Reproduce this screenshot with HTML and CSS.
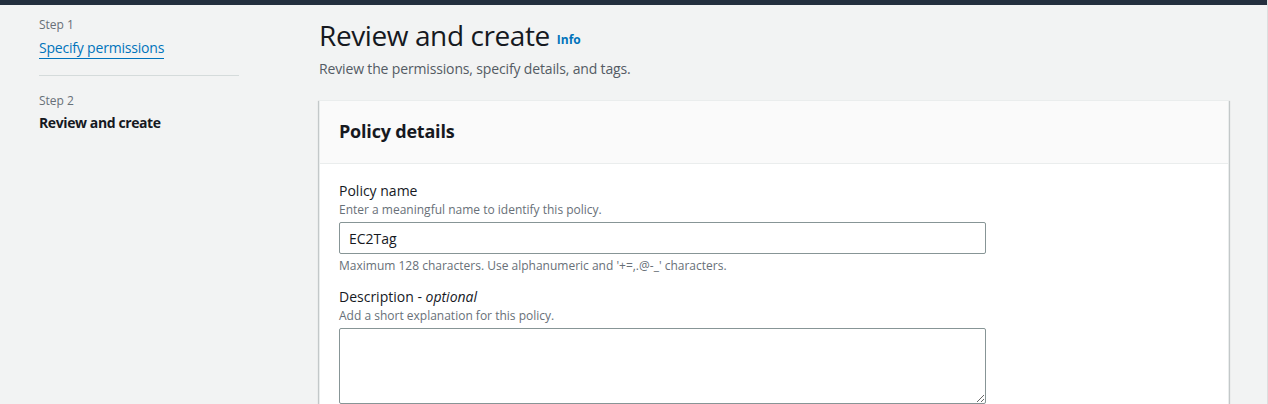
FILE: index.html
```html
<!DOCTYPE html>
<html lang="en">
<head>
<meta charset="utf-8">
<title>Review and create</title>
<link rel="stylesheet" href="styles.css">
</head>
<body>
<div class="topbar"></div>
<div class="layout">
  <nav class="steps">
    <div class="step">
      <div class="step-label">Step 1</div>
      <a class="step-link" href="#">Specify permissions</a>
    </div>
    <div class="step step-current">
      <div class="step-label">Step 2</div>
      <div class="step-title">Review and create</div>
    </div>
  </nav>
  <main class="main">
    <header class="page-header">
      <h1 class="page-title">Review and create <a class="info" href="#">Info</a></h1>
      <p class="page-desc">Review the permissions, specify details, and tags.</p>
    </header>
    <section class="card">
      <div class="card-header">
        <h2 class="card-title">Policy details</h2>
      </div>
      <div class="card-body">
        <div class="field">
          <label class="field-label">Policy name</label>
          <div class="field-desc">Enter a meaningful name to identify this policy.</div>
          <input class="input" type="text" value="EC2Tag">
          <div class="field-hint">Maximum 128 characters. Use alphanumeric and '+=,.@-_' characters.</div>
        </div>
        <div class="field">
          <label class="field-label">Description - <i>optional</i></label>
          <div class="field-desc">Add a short explanation for this policy.</div>
          <textarea class="textarea"></textarea>
        </div>
      </div>
    </section>
  </main>
</div>
</body>
</html>
```
FILE: styles.css
```css
* { box-sizing: border-box; }
html, body { margin: 0; padding: 0; }
body {
  background: #f2f3f3;
  font-family: "Open Sans", "Noto Sans", sans-serif;
  color: #16191f;
  height: 404px;
  overflow: hidden;
  border-right: 1px solid #dcdede;
}
.topbar {
  height: 5px;
  background: #232f3e;
}
.layout {
  display: flex;
}
.steps {
  width: 319px;
  flex: none;
  padding: 12px 0 0 39px;
}
.step {
  width: 200px;
}
.step-label {
  font-size: 12px;
  line-height: 16px;
  color: #687078;
}
.step-link {
  display: inline-block;
  font-size: 14px;
  line-height: 20px;
  margin-top: 5px;
  color: #0073bb;
  text-decoration: none;
  border-bottom: 1px solid #0073bb;
  letter-spacing: -0.2px;
}
.step:first-child {
  padding-bottom: 16px;
  border-bottom: 1px solid #d5dbdb;
}
.step-current {
  padding-top: 17px;
}
.step-title {
  font-size: 14px;
  line-height: 20px;
  font-weight: 700;
  margin-top: 4px;
  letter-spacing: -0.4px;
}
.main {
  flex: 1;
  padding-right: 38px;
}
.page-header {
  padding-top: 12px;
}
.page-title {
  margin: 0;
  font-size: 28px;
  line-height: 36px;
  font-weight: 400;
  letter-spacing: -0.4px;
}
.info {
  font-size: 12px;
  font-weight: 700;
  color: #0073bb;
  text-decoration: none;
  vertical-align: 2px;
  letter-spacing: 0;
}
.page-desc {
  margin: 1px 0 0;
  font-size: 14px;
  line-height: 20px;
  color: #545b64;
  letter-spacing: -0.15px;
}
.card {
  margin-top: 21px;
  background: #fff;
  border: 1px solid #eaeded;
  box-shadow: 0 1px 1px 0 rgba(0,28,36,.3), 1px 1px 1px 0 rgba(0,28,36,.15), -1px 1px 1px 0 rgba(0,28,36,.15);
}
.card-header {
  background: #fafafa;
  border-bottom: 1px solid #eaeded;
  padding: 19px 19px 21px;
}
.card-title {
  margin: 0;
  font-size: 18px;
  line-height: 22px;
  font-weight: 700;
  letter-spacing: -0.2px;
}
.card-body {
  padding: 16px 19px 20px;
}
.field + .field {
  margin-top: 12px;
}
.field-label {
  display: block;
  font-size: 14px;
  line-height: 22px;
}
.field-label i {
  font-style: italic;
}
.field-desc, .field-hint {
  font-size: 12px;
  line-height: 16px;
  color: #687078;
}
.field-hint {
  margin-top: 4px;
}
.input, .textarea {
  display: block;
  width: 647px;
  margin-top: 4px;
  border: 1px solid #879596;
  border-radius: 2px;
  font-family: inherit;
  font-size: 14px;
  color: #16191f;
  background: #fff;
}
.input {
  height: 32px;
  padding: 0 9px;
}
.textarea {
  height: 76px;
  padding: 4px 9px;
  resize: both;
}
```
